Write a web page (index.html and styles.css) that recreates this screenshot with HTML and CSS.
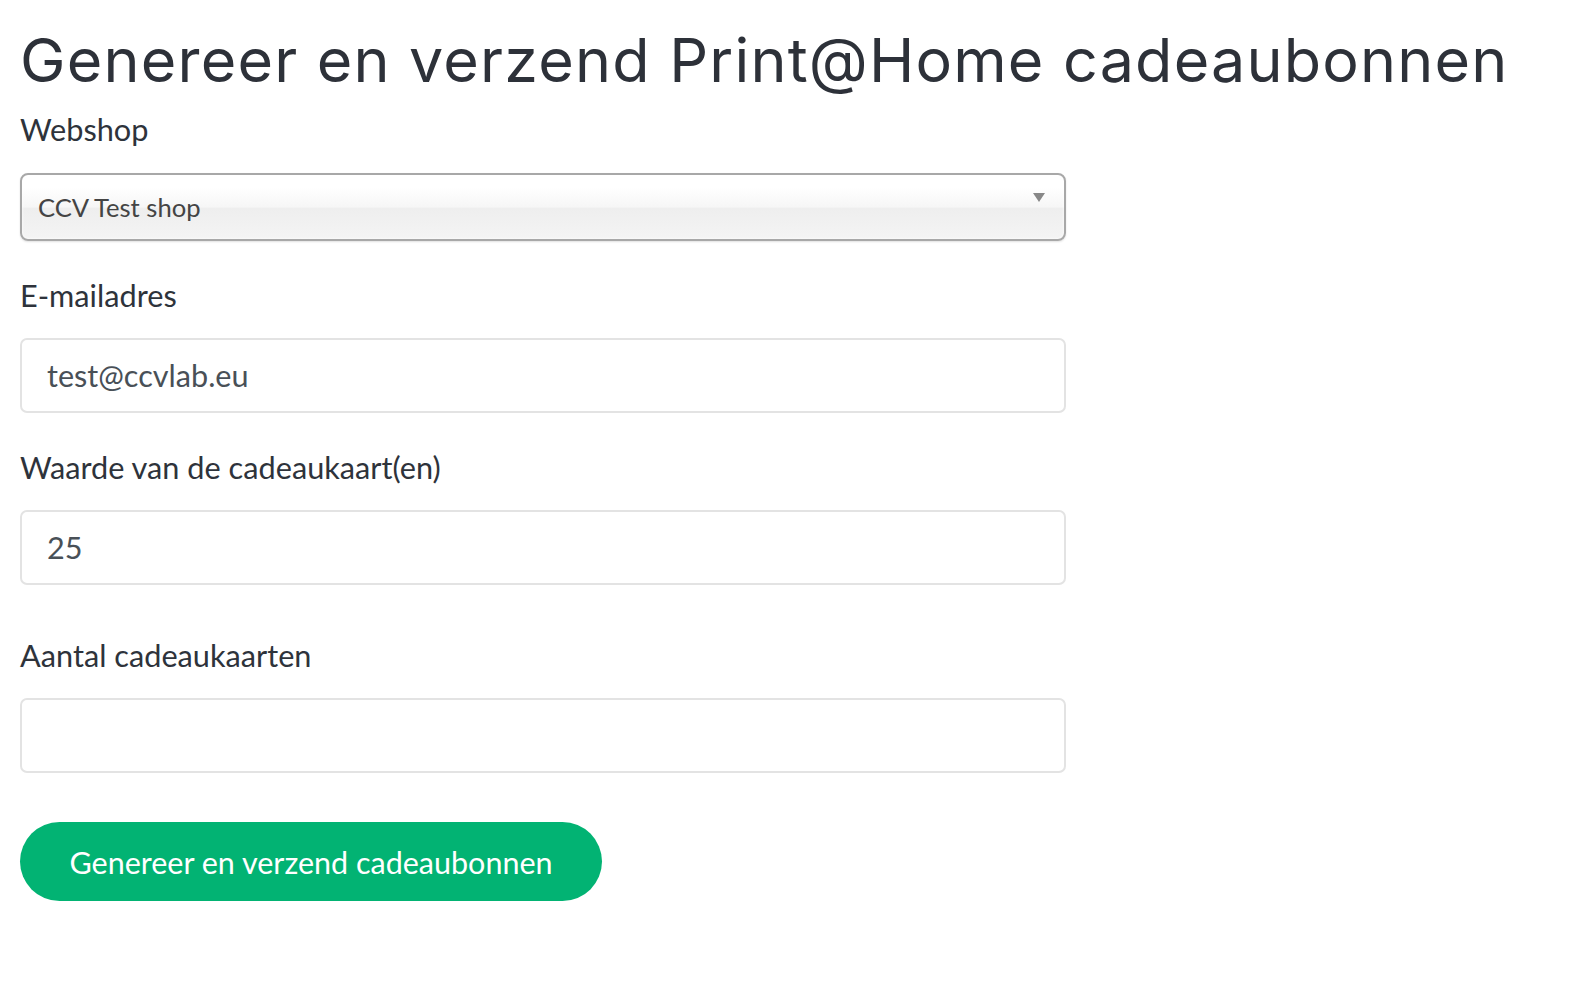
FILE: index.html
```html
<!DOCTYPE html>
<html lang="nl">
<head>
<meta charset="utf-8">
<title>Genereer en verzend Print@Home cadeaubonnen</title>
<link rel="stylesheet" href="styles.css">
</head>
<body>
<main class="page">
  <h1 class="title">Genereer en verzend Print@Home cadeaubonnen</h1>
  <form class="form">
    <div class="group">
      <label class="label">Webshop</label>
      <div class="select">
        <span class="select-text">CCV Test shop</span>
        <svg class="select-arrow" width="12" height="9" viewBox="0 0 12 9"><path d="M0 0H12L6 9Z" fill="#888"/></svg>
      </div>
    </div>
    <div class="group">
      <label class="label">E-mailadres</label>
      <div class="input">test@ccvlab.eu</div>
    </div>
    <div class="group group-wide">
      <label class="label">Waarde van de cadeaukaart(en)</label>
      <div class="input">25</div>
    </div>
    <div class="group group-last">
      <label class="label">Aantal cadeaukaarten</label>
      <div class="input"></div>
    </div>
    <button type="button" class="btn">Genereer en verzend cadeaubonnen</button>
  </form>
</main>
</body>
</html>
```
FILE: styles.css
```css
html, body {
  margin: 0;
  padding: 0;
  background: #ffffff;
}

.page {
  padding: 0 20px;
  font-family: Lato, "Noto Sans", sans-serif;
  color: #2e333b;
}

.title {
  margin: 24px 0 0;
  font-family: Inter, "Noto Sans", sans-serif;
  font-weight: 400;
  font-size: 61px;
  line-height: 73px;
  letter-spacing: 1.2px;
  color: #2d3139;
  white-space: nowrap;
}

.form {
  width: 1046px;
  margin-top: 10px;
}

.group {
  margin-bottom: 32px;
}

.group-wide {
  margin-bottom: 48px;
}

.group-last {
  margin-bottom: 49px;
}

.label {
  display: block;
  font-size: 30.7px;
  line-height: 45px;
  margin-bottom: 20px;
  color: #2e333b;
}

.group:first-child .label {
  margin-bottom: 21px;
}

.select {
  box-sizing: border-box;
  height: 68px;
  display: flex;
  align-items: center;
  padding: 0 19px 0 16px;
  border: 2px solid #a8a8a8;
  border-radius: 8px;
  background: linear-gradient(#ffffff 20%, #f6f6f6 50%, #eeeeee 52%, #f4f4f4 100%);
  box-shadow: inset 0 0 3px #ffffff, 0 1px 2px rgba(0, 0, 0, 0.12);
  font-size: 25.6px;
  line-height: 30px;
  color: #444444;
}

.select-text {
  flex: 1;
}

.select-arrow {
  align-self: flex-start;
  margin-top: 18px;
}

.input {
  box-sizing: border-box;
  height: 75px;
  display: flex;
  align-items: center;
  padding: 0 25px;
  border: 2px solid #e3e3e3;
  border-radius: 7px;
  background: #ffffff;
  font-size: 30.6px;
  line-height: 36px;
  color: #495057;
}

.btn {
  display: inline-flex;
  align-items: center;
  justify-content: center;
  box-sizing: border-box;
  height: 79px;
  width: 582px;
  padding: 0;
  border: none;
  border-radius: 40px;
  background: #02b373;
  color: #ffffff;
  font-family: Lato, "Noto Sans", sans-serif;
  font-size: 30.5px;
  line-height: 36px;
  cursor: pointer;
}
```
